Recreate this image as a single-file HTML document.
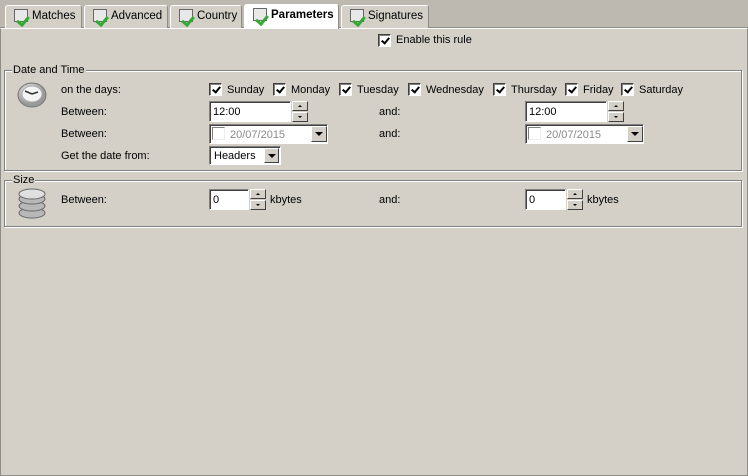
<!DOCTYPE html>
<html><head><style>
*{margin:0;padding:0;box-sizing:border-box}
body{width:748px;height:476px;background:#d4d0c8;font-family:"Liberation Sans",Tahoma,sans-serif;font-size:11px;color:#000;position:relative;overflow:hidden}
.a{position:absolute;white-space:nowrap}
.strip{left:0;top:0;width:748px;height:28px;background:#bdb9b1;border-bottom:1px solid #8f8c86}
.panel{left:0;top:28px;width:748px;height:448px;border-left:1px solid #8f8c86;border-right:1px solid #8f8c86;border-bottom:1px solid #8f8c86;border-top:1px solid #fff}
.tab{top:5px;height:23px;background:#d4d0c8;border:1px solid #fff;border-right-color:#8f8c86;border-bottom:none;border-radius:3px 3px 0 0;padding:4px 0 0 26px;font-size:11.5px}
.tab.on{background:#fff;font-weight:bold;top:4px;height:25px}
.ic{position:absolute;left:8px;top:3px;width:14px;height:13px;background:#e8e8e8;border:1px solid #666}
.ic:after{content:"";position:absolute;left:4px;top:4px;width:5px;height:9px;border-right:3px solid #3a3;border-bottom:3px solid #3a3;transform:rotate(40deg)}
.cb{width:13px;height:13px;background:#fff;border:1px solid #404040;border-right-color:#fff;border-bottom-color:#fff;box-shadow:inset 1px 1px #808080}
.cb:after{content:"";position:absolute;left:4px;top:1px;width:3px;height:6px;border-right:2px solid #000;border-bottom:2px solid #000;transform:rotate(40deg)}
.grp{border:1px solid #808080;box-shadow:1px 1px #fff, inset 1px 1px #fff}
.lg{background:#d4d0c8;padding:0 1px}
.in{background:#fff;border:1px solid #808080;border-right-color:#fff;border-bottom-color:#fff;box-shadow:inset 1px 1px #404040;padding:4px 0 0 3px;font-size:11px}
.sp{width:16px;height:21px}
.sp div{position:absolute;left:0;width:16px;height:10px;background:#d4d0c8;border:1px solid #fff;border-right-color:#404040;border-bottom-color:#404040}
.sp div:after{content:"";position:absolute;left:5px;border-left:2px solid transparent;border-right:2px solid transparent}
.sp .u{top:0}.sp .u:after{top:3px;border-bottom:2px solid #000}
.sp .d{top:11px}.sp .d:after{top:3px;border-top:2px solid #000}
.dd{width:16px;height:16px;background:#d4d0c8;border:1px solid #fff;border-right-color:#404040;border-bottom-color:#404040}
.dd:after{content:"";position:absolute;left:3px;top:5px;border-left:4px solid transparent;border-right:4px solid transparent;border-top:4px solid #000}
.gray{color:#8a8a8a}
</style></head><body>
<div class="a strip"></div>
<div class="a panel"></div>
<div class="a tab" style="left:5px;width:77px"><span class="ic"></span>Matches</div>
<div class="a tab" style="left:84px;width:84px"><span class="ic"></span>Advanced</div>
<div class="a tab" style="left:170px;width:72px"><span class="ic"></span>Country</div>
<div class="a tab on" style="left:244px;width:95px"><span class="ic"></span>Parameters</div>
<div class="a tab" style="left:341px;width:88px"><span class="ic"></span>Signatures</div>

<div class="a cb" style="left:378px;top:34px"></div>
<div class="a" style="left:396px;top:34px">Enable this rule</div>

<div class="a grp" style="left:4px;top:70px;width:738px;height:101px"></div>
<div class="a lg" style="left:12px;top:64px">Date and Time</div>
<div class="a grp" style="left:4px;top:180px;width:738px;height:47px"></div>
<div class="a lg" style="left:12px;top:174px">Size</div>

<svg class="a" style="left:16px;top:81px" width="32" height="28" viewBox="0 0 32 28"><defs><radialGradient id="g" cx=".4" cy=".35"><stop offset="0" stop-color="#fff"/><stop offset="1" stop-color="#9a9a9a"/></radialGradient></defs><ellipse cx="16" cy="14" rx="14" ry="12" fill="url(#g)" stroke="#777"/><ellipse cx="16" cy="13" rx="10" ry="8" fill="#f4f4f4" stroke="#aaa"/><path d="M16 13L9 10M16 13L22 11" stroke="#333" stroke-width="1.5"/></svg>
<svg class="a" style="left:16px;top:188px" width="32" height="32" viewBox="0 0 32 32"><g fill="#b8b8b8" stroke="#666"><ellipse cx="16" cy="25" rx="13" ry="5"/><ellipse cx="16" cy="18" rx="13" ry="5"/><ellipse cx="16" cy="11" rx="13" ry="5"/><ellipse cx="16" cy="6" rx="13" ry="5" fill="#e0e0e0"/></g></svg>

<div class="a" style="left:61px;top:84px">on the days:</div>
<div class="a" style="left:61px;top:106px">Between:</div>
<div class="a" style="left:61px;top:128px">Between:</div>
<div class="a" style="left:61px;top:150px">Get the date from:</div>
<div class="a" style="left:61px;top:194px">Between:</div>

<div class="a cb" style="left:209px;top:83px"></div><div class="a" style="left:227px;top:84px">Sunday</div>
<div class="a cb" style="left:273px;top:83px"></div><div class="a" style="left:291px;top:84px">Monday</div>
<div class="a cb" style="left:339px;top:83px"></div><div class="a" style="left:357px;top:84px">Tuesday</div>
<div class="a cb" style="left:408px;top:83px"></div><div class="a" style="left:426px;top:84px">Wednesday</div>
<div class="a cb" style="left:493px;top:83px"></div><div class="a" style="left:511px;top:84px">Thursday</div>
<div class="a cb" style="left:565px;top:83px"></div><div class="a" style="left:583px;top:84px">Friday</div>
<div class="a cb" style="left:621px;top:83px"></div><div class="a" style="left:639px;top:84px">Saturday</div>

<div class="a in" style="left:209px;top:101px;width:82px;height:21px">12:00</div>
<div class="a sp" style="left:292px;top:101px"><div class="u"></div><div class="d"></div></div>
<div class="a" style="left:379px;top:106px">and:</div>
<div class="a in" style="left:525px;top:101px;width:82px;height:21px">12:00</div>
<div class="a sp" style="left:608px;top:101px"><div class="u"></div><div class="d"></div></div>

<div class="a in gray" style="left:209px;top:124px;width:119px;height:20px;padding-left:20px">20/07/2015</div>
<div class="a" style="left:212px;top:127px;width:13px;height:13px;border:1px solid #808080;border-right-color:#eee;border-bottom-color:#eee;background:#fff"></div>
<div class="a dd" style="left:311px;top:126px"></div>
<div class="a" style="left:379px;top:128px">and:</div>
<div class="a in gray" style="left:525px;top:124px;width:119px;height:20px;padding-left:20px">20/07/2015</div>
<div class="a" style="left:528px;top:127px;width:13px;height:13px;border:1px solid #808080;border-right-color:#eee;border-bottom-color:#eee;background:#fff"></div>
<div class="a dd" style="left:627px;top:126px"></div>

<div class="a in" style="left:209px;top:146px;width:72px;height:19px;padding-left:4px;padding-top:3px">Headers</div>
<div class="a dd" style="left:264px;top:148px;width:15px;height:15px"></div>

<div class="a in" style="left:209px;top:189px;width:40px;height:21px">0</div>
<div class="a sp" style="left:250px;top:189px"><div class="u"></div><div class="d"></div></div>
<div class="a" style="left:270px;top:194px">kbytes</div>
<div class="a" style="left:379px;top:194px">and:</div>
<div class="a in" style="left:525px;top:189px;width:41px;height:21px">0</div>
<div class="a sp" style="left:567px;top:189px"><div class="u"></div><div class="d"></div></div>
<div class="a" style="left:587px;top:194px">kbytes</div>
</body></html>
